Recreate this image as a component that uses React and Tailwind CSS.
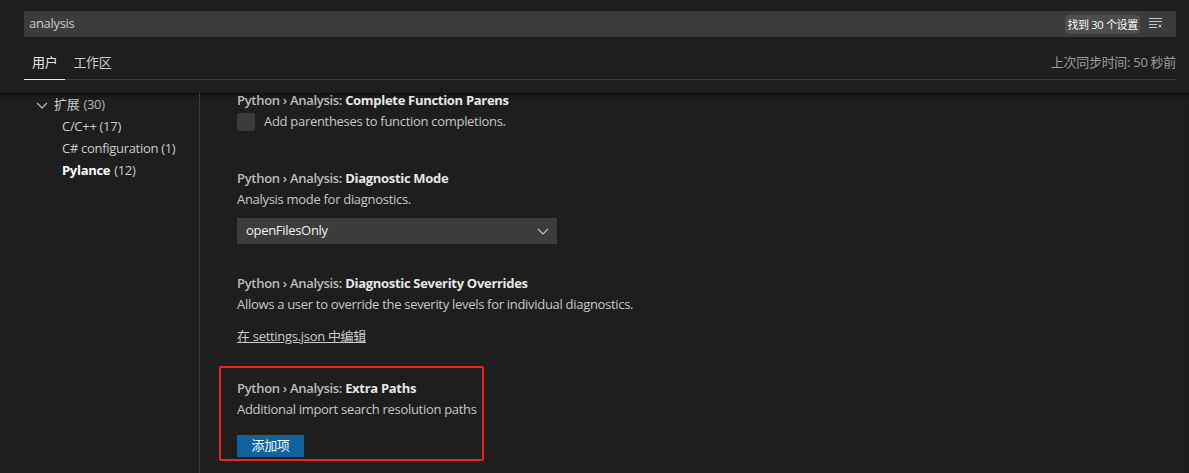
import React from 'react';

const font = { fontFamily: "'Open Sans', 'Noto Sans CJK SC', sans-serif" };

const ClearIcon = () => (
  <svg width="16" height="16" viewBox="0 0 16 16" fill="none" stroke="#c5c5c5" strokeWidth="1">
    <path d="M1 2.5h13M1 5.5h13M1 8.5h8M1 11.5h8" />
    <path d="M10.5 8.5l3 3M13.5 8.5l-3 3" />
  </svg>
);

const Chevron = ({ className }) => (
  <svg className={className} width="16" height="16" viewBox="0 0 16 16" fill="none" stroke="#c5c5c5" strokeWidth="1.1">
    <path d="M3 6l5 5 5-5" />
  </svg>
);

const Title = ({ label, first }) => (
  <div className={first ? 'h-[14px] text-[13px] leading-[14px]' : 'h-[22px] text-[13px] leading-[22px]'}>
    <span className="font-semibold text-[#bdbdbd]">Python › Analysis: </span>
    <span className="font-bold text-[#e7e7e7]">{label}</span>
  </div>
);

const Desc = ({ children }) => (
  <div className="h-5 whitespace-nowrap text-[13px] leading-5 text-[#c8c8c8]">{children}</div>
);

export default function App() {
  return (
    <div className="h-[473px] w-[1189px] overflow-hidden bg-[#1e1e1e] tracking-[-0.3px] text-[#cccccc]" style={font}>
      {/* Search */}
      <div className="pl-6 pr-[13px] pt-[11px]">
        <div className="flex h-[26px] items-center bg-[#3c3c3c] pl-[5px] pr-3">
          <span className="flex-1 text-[13px]">analysis</span>
          <span className="rounded-sm bg-[#4d4d4d] px-[2px] text-[11px] leading-[19px] text-white">找到 30 个设置</span>
          <span className="ml-2">
            <ClearIcon />
          </span>
        </div>
      </div>

      {/* Tabs */}
      <div className="ml-6 mr-[13px] mt-[9px] flex h-[34px] items-stretch border-b border-[#3c3c3c]">
        <div className="-mb-px flex items-center border-b border-[#e7e7e7] px-2 text-[13px] text-[#e7e7e7]">用户</div>
        <div className="flex items-center px-2 text-[13px] text-[#cccccc]">工作区</div>
        <div className="flex flex-1 items-center justify-end text-[13px] text-[#9d9d9d]">上次同步时间: 50 秒前</div>
      </div>

      {/* Body */}
      <div className="mt-[13px] flex h-[380px] shadow-[inset_0_6px_6px_-6px_#000]">
        <div className="w-[200px] shrink-0 border-r border-[#3c3c3c] pt-px text-[13px]">
          <div className="flex h-[22px] items-center pl-[34px]">
            <Chevron className="mr-1" />
            <span>扩展</span>
            <span className="ml-1 text-[#b5b5b5]">(30)</span>
          </div>
          <div className="flex h-[22px] items-center pl-[62px]">C/C++ (17)</div>
          <div className="flex h-[22px] items-center pl-[62px]">C# configuration (1)</div>
          <div className="flex h-[22px] items-center pl-[62px]">
            <span className="font-bold text-white">Pylance</span>
            <span className="ml-1">(12)</span>
          </div>
        </div>

        <div className="flex-1 pl-[37px]">
          <div>
            <Title label="Complete Function Parens" first />
            <div className="mt-[6px] flex h-[18px] items-center">
              <div className="h-[18px] w-[18px] rounded-[3px] bg-[#3c3c3c]" />
              <span className="ml-[9px] text-[13px] text-[#c8c8c8]">Add parentheses to function completions.</span>
            </div>
          </div>

          <div className="mt-9">
            <Title label="Diagnostic Mode" />
            <Desc>Analysis mode for diagnostics.</Desc>
            <div className="mt-[9px] flex h-[26px] w-[320px] items-center justify-between bg-[#3c3c3c] pl-[9px] pr-[6px] text-[13px] text-[#f0f0f0]">
              <span>openFilesOnly</span>
              <Chevron />
            </div>
          </div>

          <div className="mt-7">
            <Title label="Diagnostic Severity Overrides" />
            <Desc>Allows a user to override the severity levels for individual diagnostics.</Desc>
            <div className="mt-3 h-5 text-[13px] leading-5 text-[#cccccc] underline">在 settings.json 中编辑</div>
          </div>

          <div className="-ml-[18px] mt-5 w-[265px] rounded-[2px] border-2 border-[#f5221b] pb-[2px] pl-4 pt-[9px]">
            <Title label="Extra Paths" />
            <Desc>Additional import search resolution paths</Desc>
            <button className="mt-4 h-[22px] w-[67px] bg-[#0e639c] text-[13px] text-white">添加项</button>
          </div>
        </div>
      </div>
    </div>
  );
}
